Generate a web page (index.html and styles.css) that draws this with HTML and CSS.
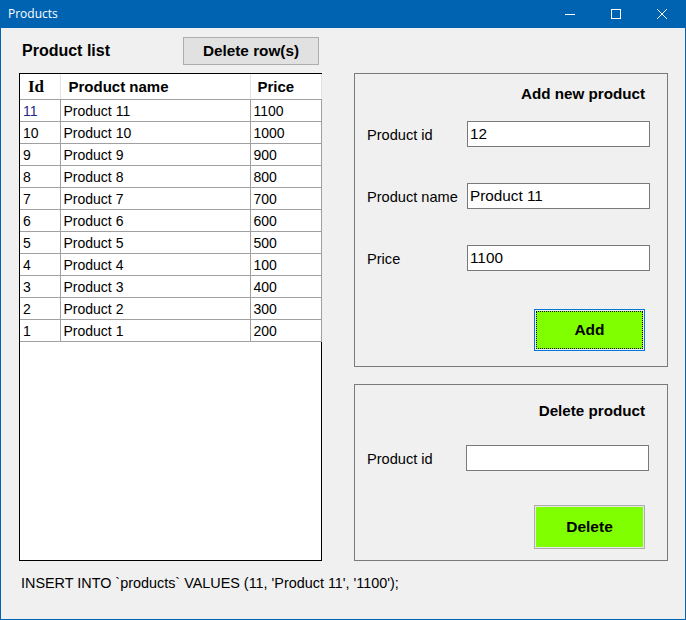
FILE: index.html
```html
<!DOCTYPE html>
<html>
<head>
<meta charset="utf-8">
<title>Products</title>
<link rel="stylesheet" href="styles.css">
</head>
<body>
<div class="window">
  <div class="titlebar">
    <span class="title">Products</span>
    <div class="controls">
      <span class="ctl"><svg width="12" height="12" viewBox="0 0 12 12"><path d="M1 6.5H11" stroke="#fff" stroke-width="1"/></svg></span>
      <span class="ctl"><svg width="12" height="12" viewBox="0 0 12 12"><rect x="1.5" y="1.5" width="9" height="9" fill="none" stroke="#fff" stroke-width="1"/></svg></span>
      <span class="ctl"><svg width="12" height="12" viewBox="0 0 12 12"><path d="M1 1L11 11M11 1L1 11" stroke="#fff" stroke-width="1"/></svg></span>
    </div>
  </div>
  <div class="client">
    <div class="toprow">
      <span class="list-label">Product list</span>
      <button class="btn-del-rows">Delete row(s)</button>
    </div>
    <div class="main">
      <div class="grid">
        <table>
          <thead>
            <tr><th class="c-id">Id</th><th class="c-name">Product name</th><th class="c-price">Price</th></tr>
          </thead>
          <tbody>
            <tr class="sel"><td>11</td><td>Product 11</td><td>1100</td></tr>
            <tr><td>10</td><td>Product 10</td><td>1000</td></tr>
            <tr><td>9</td><td>Product 9</td><td>900</td></tr>
            <tr><td>8</td><td>Product 8</td><td>800</td></tr>
            <tr><td>7</td><td>Product 7</td><td>700</td></tr>
            <tr><td>6</td><td>Product 6</td><td>600</td></tr>
            <tr><td>5</td><td>Product 5</td><td>500</td></tr>
            <tr><td>4</td><td>Product 4</td><td>100</td></tr>
            <tr><td>3</td><td>Product 3</td><td>400</td></tr>
            <tr><td>2</td><td>Product 2</td><td>300</td></tr>
            <tr><td>1</td><td>Product 1</td><td>200</td></tr>
          </tbody>
        </table>
      </div>
      <div class="side">
        <div class="box box-add">
          <div class="box-title">Add new product</div>
          <div class="field"><label>Product id</label><div class="input">12</div></div>
          <div class="field"><label>Product name</label><div class="input">Product 11</div></div>
          <div class="field"><label>Price</label><div class="input">1100</div></div>
          <div class="btn-row"><button class="btn-green btn-add"><span>Add</span></button></div>
        </div>
        <div class="box box-del">
          <div class="box-title">Delete product</div>
          <div class="field"><label>Product id</label><div class="input"></div></div>
          <div class="btn-row"><button class="btn-green btn-delete"><span>Delete</span></button></div>
        </div>
      </div>
    </div>
    <div class="status">INSERT INTO `products` VALUES (11, 'Product 11', '1100');</div>
  </div>
</div>
</body>
</html>
```

FILE: styles.css
```css
* { box-sizing: border-box; }
html, body { margin: 0; padding: 0; }
body { font-family: "Liberation Sans", Arial, sans-serif; color: #000; }

.window {
  width: 686px;
  height: 620px;
  background: #0063B1;
  padding: 0 1px 1px 1px;
  display: flex;
  flex-direction: column;
}

.titlebar {
  height: 28px;
  display: flex;
  align-items: center;
  justify-content: space-between;
  color: #fff;
}
.title {
  font-family: "Open Sans", "Noto Sans", sans-serif;
  font-size: 12px;
  padding-left: 7px;
  margin-top: -2px;
}
.controls { display: flex; height: 28px; }
.ctl {
  width: 46px;
  display: flex;
  align-items: center;
  justify-content: center;
}

.client {
  flex: 1;
  background: #F0F0F0;
  padding: 9px 0 0 18px;
  display: flex;
  flex-direction: column;
}

.toprow {
  display: flex;
  align-items: center;
  height: 28px;
}
.list-label {
  font-size: 16px;
  font-weight: bold;
  padding-left: 3px;
  width: 164px;
  margin-top: -1px;
}
.btn-del-rows {
  width: 136px;
  height: 28px;
  background: #E1E1E1;
  border: 1px solid #ADADAD;
  font-family: "Liberation Sans", Arial, sans-serif;
  font-weight: bold;
  font-size: 15.3px;
  padding: 0;
  color: #000;
}

.main {
  display: flex;
  margin-top: 8px;
  gap: 32px;
}

.grid {
  width: 303px;
  height: 488px;
  border: 1px solid #000;
  background: #fff;
}
table {
  border-collapse: collapse;
  width: 301px;
  table-layout: fixed;
}
th, td {
  border-right: 1px solid #A0A0A0;
  border-bottom: 1px solid #A0A0A0;
  padding: 0 0 0 3px;
  text-align: left;
  white-space: nowrap;
}
th {
  height: 25px;
  font-size: 15px;
  font-weight: bold;
  border-right-color: #E3E3E3;
  padding-top: 1px;
}
th.c-id { width: 40px; font-family: "Liberation Serif", "Times New Roman", serif; font-size: 17px; padding-left: 8px; }
th.c-name { width: 190px; padding-left: 8px; }
th.c-price { width: 71px; padding-left: 7px; }
td {
  height: 22px;
  font-size: 14px;
  padding-top: 1px;
}
tr.sel td:first-child { color: #1E2A8A; }

.side {
  width: 314px;
  display: flex;
  flex-direction: column;
  gap: 17px;
}

.box {
  border: 1px solid #7A7A7A;
  display: flex;
  flex-direction: column;
  padding: 0 17px 0 12px;
}
.box-add { height: 294px; padding-top: 12px; }
.box-del { height: 177px; padding-top: 18px; }

.box-title {
  font-size: 15.2px;
  font-weight: bold;
  text-align: right;
  line-height: 16px;
  padding-right: 5px;
}

.field {
  display: flex;
  align-items: center;
  height: 26px;
}
.box-add .field { margin-top: 36px; }
.box-add .field:nth-of-type(2) { margin-top: 19px; }
.box-del .field { margin-top: 26px; }
.box-del .field .input { margin-left: -1px; width: 183px; }

.field label {
  width: 100px;
  font-size: 14.6px;
  margin-top: 1px;
}
.input {
  width: 183px;
  height: 26px;
  background: #fff;
  border: 1px solid #7A7A7A;
  font-size: 15.3px;
  line-height: 24px;
  padding-left: 2px;
}

.btn-row {
  display: flex;
  justify-content: flex-end;
  padding-right: 5px;
}
.box-add .btn-row { margin-top: 38px; }
.box-del .btn-row { margin-top: 34px; }

.btn-green {
  padding: 0;
  font-family: "Liberation Sans", Arial, sans-serif;
  font-weight: bold;
  font-size: 15.5px;
  color: #000;
  background: #80FF00;
}
.btn-green span {
  display: flex;
  align-items: center;
  justify-content: center;
  height: 100%;
}
.btn-add {
  width: 111px;
  height: 42px;
  border: 1px solid #0078D7;
  box-shadow: inset 0 0 0 1px #F0F0F0;
}
.btn-add span {
  margin: 1px;
  height: calc(100% - 2px);
  border: 1px dotted #000;
}
.btn-delete {
  width: 111px;
  height: 44px;
  border: 1px solid #ADADAD;
  box-shadow: inset 0 0 0 1px #E8E8E8;
}

.status {
  margin-top: 14px;
  padding-left: 2px;
  font-size: 14.4px;
  line-height: 16px;
}
```
